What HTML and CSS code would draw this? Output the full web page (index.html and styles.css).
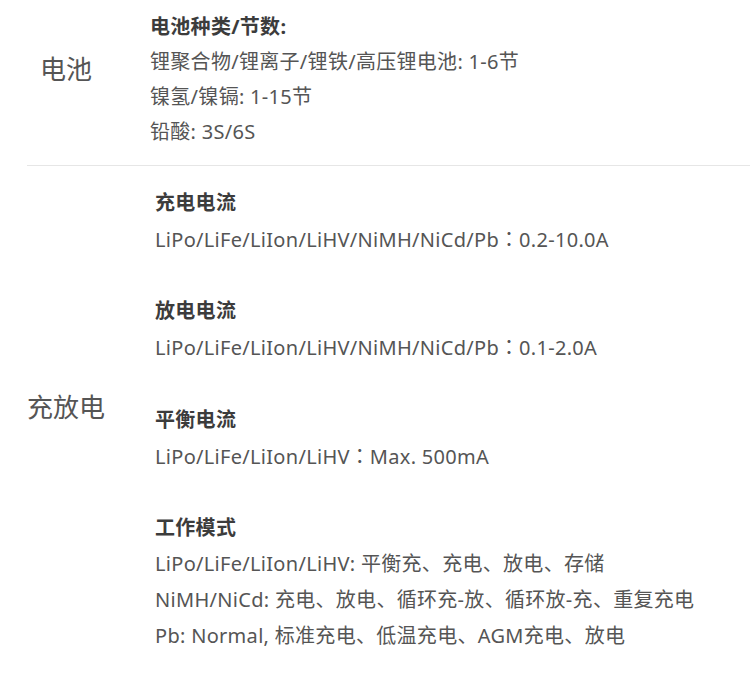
FILE: index.html
```html
<!DOCTYPE html>
<html lang="zh-CN">
<head>
<meta charset="utf-8">
<title>规格参数</title>
<link rel="stylesheet" href="styles.css">
</head>
<body>
<div class="specs">
  <div class="spec-row spec-battery">
    <div class="spec-label">电池</div>
    <div class="spec-body">
      <div class="spec-title">电池种类/节数:</div>
      <div class="spec-line">锂聚合物/锂离子/锂铁/高压锂电池: 1-6节</div>
      <div class="spec-line">镍氢/镍镉: 1-15节</div>
      <div class="spec-line">铅酸: 3S/6S</div>
    </div>
  </div>
  <div class="spec-row spec-charge">
    <div class="spec-label">充放电</div>
    <div class="spec-body">
      <div class="spec-group">
        <div class="spec-title">充电电流</div>
        <div class="spec-line">LiPo/LiFe/LiIon/LiHV/NiMH/NiCd/Pb<span class="fw-colon" lang="zh-Hant">：</span>0.2-10.0A</div>
      </div>
      <div class="spec-group">
        <div class="spec-title">放电电流</div>
        <div class="spec-line">LiPo/LiFe/LiIon/LiHV/NiMH/NiCd/Pb<span class="fw-colon" lang="zh-Hant">：</span>0.1-2.0A</div>
      </div>
      <div class="spec-group">
        <div class="spec-title">平衡电流</div>
        <div class="spec-line">LiPo/LiFe/LiIon/LiHV<span class="fw-colon" lang="zh-Hant">：</span>Max. 500mA</div>
      </div>
      <div class="spec-group">
        <div class="spec-title">工作模式</div>
        <div class="spec-line">LiPo/LiFe/LiIon/LiHV: 平衡充、充电、放电、存储</div>
        <div class="spec-line">NiMH/NiCd: 充电、放电、循环充-放、循环放-充、重复充电</div>
        <div class="spec-line">Pb: Normal, 标准充电、低温充电、AGM充电、放电</div>
      </div>
    </div>
  </div>
</div>
</body>
</html>
```

FILE: styles.css
```css
html, body {
  margin: 0;
  padding: 0;
  background: #ffffff;
}
body {
  font-family: "Noto Sans", "Noto Sans CJK SC", sans-serif;
  color: #555555;
  font-size: 20px;
  letter-spacing: 0.3px;
}
.specs {
  margin-left: 27px;
}
.spec-row {
  display: flex;
  align-items: center;
}
.spec-battery {
  padding: 9px 0 16px;
  border-bottom: 1px solid #e6e6e6;
}
.spec-charge {
  padding: 19px 0 30px;
}
.spec-label {
  width: 78px;
  flex: none;
  text-align: center;
  white-space: nowrap;
  font-size: 26px;
  letter-spacing: 0;
  color: #555555;
  margin-bottom: 22px;
}
.spec-charge .spec-label {
  margin-bottom: 26px;
}
.spec-battery .spec-body {
  padding-left: 45px;
  line-height: 35px;
}
.spec-charge .spec-body {
  padding-left: 50px;
  line-height: 35.8px;
  display: flex;
  flex-direction: column;
  gap: 35.8px;
}
.spec-title {
  font-weight: bold;
  color: #3c3c3c;
}
.spec-line {
  white-space: nowrap;
}
.fw-colon {
  font-family: "Noto Sans CJK TC", sans-serif;
  letter-spacing: 0;
}
```
